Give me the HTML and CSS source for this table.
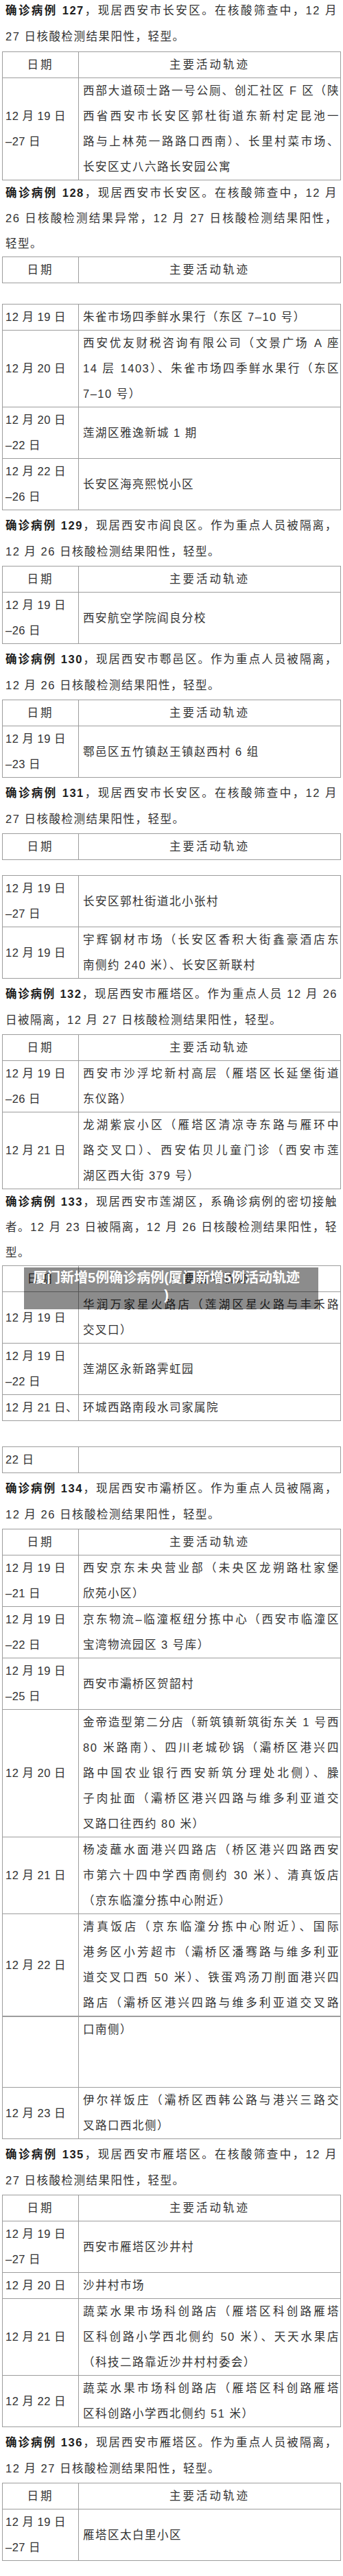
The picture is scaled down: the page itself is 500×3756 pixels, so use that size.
FILE: index.html
```html
<!DOCTYPE html>
<html lang="zh-CN">
<head>
<meta charset="utf-8">
<title>确诊病例活动轨迹</title>
<link rel="stylesheet" href="styles.css">
</head>
<body>
<div class="page">

<p class="para first"><span class="ln j"><b>确诊病例 127</b>，现居西安市长安区。在核酸筛查中，12 月</span><span class="ln">27 日核酸检测结果阳性，轻型。</span></p>
<table class="trk">
<colgroup><col class="dcol"><col></colgroup>
<tr><th>日期</th><th>主要活动轨迹</th></tr>
<tr><td class="d"><span class="ln">12 月 19 日</span><span class="ln">–27 日</span></td><td class="c"><span class="ln j">西部大道硕士路一号公厕、创汇社区 F 区（陕</span><span class="ln j">西省西安市长安区郭杜街道东新村定昆池一</span><span class="ln j">路与上林苑一路路口西南）、长里村菜市场、</span><span class="ln">长安区丈八六路长安园公寓</span></td></tr>
</table>

<p class="para p3"><span class="ln j"><b>确诊病例 128</b>，现居西安市长安区。在核酸筛查中，12 月</span><span class="ln j">26 日核酸检测结果异常，12 月 27 日核酸检测结果阳性，</span><span class="ln">轻型。</span></p>
<table class="trk">
<colgroup><col class="dcol"><col></colgroup>
<tr><th>日期</th><th>主要活动轨迹</th></tr>
</table>
<table class="trk gap30">
<colgroup><col class="dcol"><col></colgroup>
<tr><td class="d">12 月 19 日</td><td class="c">朱雀市场四季鲜水果行（东区 7–10 号）</td></tr>
<tr><td class="d">12 月 20 日</td><td class="c"><span class="ln j">西安优友财税咨询有限公司（文景广场 A 座</span><span class="ln j">14 层 1403）、朱雀市场四季鲜水果行（东区</span><span class="ln">7–10 号）</span></td></tr>
<tr><td class="d"><span class="ln">12 月 20 日</span><span class="ln">–22 日</span></td><td class="c">莲湖区雅逸新城 1 期</td></tr>
<tr><td class="d"><span class="ln">12 月 22 日</span><span class="ln">–26 日</span></td><td class="c">长安区海亮熙悦小区</td></tr>
</table>

<p class="para"><span class="ln j"><b>确诊病例 129</b>，现居西安市阎良区。作为重点人员被隔离，</span><span class="ln">12 月 26 日核酸检测结果阳性，轻型。</span></p>
<table class="trk">
<colgroup><col class="dcol"><col></colgroup>
<tr><th>日期</th><th>主要活动轨迹</th></tr>
<tr><td class="d"><span class="ln">12 月 19 日</span><span class="ln">–26 日</span></td><td class="c">西安航空学院阎良分校</td></tr>
</table>

<p class="para"><span class="ln j"><b>确诊病例 130</b>，现居西安市鄠邑区。作为重点人员被隔离，</span><span class="ln">12 月 26 日核酸检测结果阳性，轻型。</span></p>
<table class="trk">
<colgroup><col class="dcol"><col></colgroup>
<tr><th>日期</th><th>主要活动轨迹</th></tr>
<tr><td class="d"><span class="ln">12 月 19 日</span><span class="ln">–23 日</span></td><td class="c">鄠邑区五竹镇赵王镇赵西村 6 组</td></tr>
</table>

<p class="para"><span class="ln j"><b>确诊病例 131</b>，现居西安市长安区。在核酸筛查中，12 月</span><span class="ln">27 日核酸检测结果阳性，轻型。</span></p>
<table class="trk">
<colgroup><col class="dcol"><col></colgroup>
<tr><th>日期</th><th>主要活动轨迹</th></tr>
</table>
<table class="trk gap22">
<colgroup><col class="dcol"><col></colgroup>
<tr><td class="d"><span class="ln">12 月 19 日</span><span class="ln">–27 日</span></td><td class="c">长安区郭杜街道北小张村</td></tr>
<tr><td class="d">12 月 19 日</td><td class="c"><span class="ln j">宇辉钢材市场（长安区香积大街鑫豪酒店东</span><span class="ln">南侧约 240 米）、长安区新联村</span></td></tr>
</table>

<p class="para"><span class="ln j"><b>确诊病例 132</b>，现居西安市雁塔区。作为重点人员 12 月 26</span><span class="ln">日被隔离，12 月 27 日核酸检测结果阳性，轻型。</span></p>
<table class="trk">
<colgroup><col class="dcol"><col></colgroup>
<tr><th>日期</th><th>主要活动轨迹</th></tr>
<tr><td class="d"><span class="ln">12 月 19 日</span><span class="ln">–26 日</span></td><td class="c"><span class="ln j">西安市沙浮坨新村高层（雁塔区长延堡街道</span><span class="ln">东仪路）</span></td></tr>
<tr><td class="d">12 月 21 日</td><td class="c"><span class="ln j">龙湖紫宸小区（雁塔区清凉寺东路与雁环中</span><span class="ln j">路交叉口）、西安佑贝儿童门诊（西安市莲</span><span class="ln">湖区西大街 379 号）</span></td></tr>
</table>

<p class="para p3"><span class="ln j"><b>确诊病例 133</b>，现居西安市莲湖区，系确诊病例的密切接触</span><span class="ln j">者。12 月 23 日被隔离，12 月 26 日核酸检测结果阳性，轻</span><span class="ln">型。</span></p>
<div class="wrap">
<table class="trk">
<colgroup><col class="dcol"><col></colgroup>
<tr><th>日期</th><th>主要活动轨迹</th></tr>
<tr><td class="d">12 月 19 日</td><td class="c"><span class="ln j">华润万家星火路店（莲湖区星火路与丰禾路</span><span class="ln">交叉口）</span></td></tr>
<tr><td class="d"><span class="ln">12 月 19 日</span><span class="ln">–22 日</span></td><td class="c">莲湖区永新路霁虹园</td></tr>
<tr><td class="d">12 月 21 日、</td><td class="c">环城西路南段水司家属院</td></tr>
</table>
<div class="ovl">厦门新增5例确诊病例(厦门新增5例活动轨迹<br>)</div>
</div>
<table class="trk gap37">
<colgroup><col class="dcol"><col></colgroup>
<tr><td class="d">22 日</td><td class="c"></td></tr>
</table>

<p class="para"><span class="ln j"><b>确诊病例 134</b>，现居西安市灞桥区。作为重点人员被隔离，</span><span class="ln">12 月 26 日核酸检测结果阳性，轻型。</span></p>
<table class="trk">
<colgroup><col class="dcol"><col></colgroup>
<tr><th>日期</th><th>主要活动轨迹</th></tr>
<tr><td class="d"><span class="ln">12 月 19 日</span><span class="ln">–21 日</span></td><td class="c"><span class="ln j">西安京东未央营业部（未央区龙朔路杜家堡</span><span class="ln">欣苑小区）</span></td></tr>
<tr><td class="d"><span class="ln">12 月 19 日</span><span class="ln">–22 日</span></td><td class="c"><span class="ln j">京东物流–临潼枢纽分拣中心（西安市临潼区</span><span class="ln">宝湾物流园区 3 号库）</span></td></tr>
<tr><td class="d"><span class="ln">12 月 19 日</span><span class="ln">–25 日</span></td><td class="c">西安市灞桥区贺韶村</td></tr>
<tr><td class="d">12 月 20 日</td><td class="c"><span class="ln j">金帝造型第二分店（新筑镇新筑街东关 1 号西</span><span class="ln j">80 米路南）、四川老城砂锅（灞桥区港兴四</span><span class="ln j">路中国农业银行西安新筑分理处北侧）、臊</span><span class="ln j">子肉扯面（灞桥区港兴四路与维多利亚道交</span><span class="ln">叉路口往西约 80 米）</span></td></tr>
<tr><td class="d">12 月 21 日</td><td class="c"><span class="ln j">杨凌蘸水面港兴四路店（桥区港兴四路西安</span><span class="ln j">市第六十四中学西南侧约 30 米）、清真饭店</span><span class="ln">（京东临潼分拣中心附近）</span></td></tr>
<tr><td class="d">12 月 22 日</td><td class="c"><span class="ln j">清真饭店（京东临潼分拣中心附近）、国际</span><span class="ln j">港务区小芳超市（灞桥区潘骞路与维多利亚</span><span class="ln j">道交叉口西 50 米）、铁蛋鸡汤刀削面港兴四</span><span class="ln j">路店（灞桥区港兴四路与维多利亚道交叉路</span></td></tr>
</table>
<table class="trk">
<colgroup><col class="dcol"><col></colgroup>
<tr><td class="d"></td><td class="c hang">口南侧）</td></tr>
<tr><td class="d">12 月 23 日</td><td class="c"><span class="ln j">伊尔祥饭庄（灞桥区西韩公路与港兴三路交</span><span class="ln">叉路口西北侧）</span></td></tr>
</table>

<p class="para"><span class="ln j"><b>确诊病例 135</b>，现居西安市雁塔区。在核酸筛查中，12 月</span><span class="ln">27 日核酸检测结果阳性，轻型。</span></p>
<table class="trk">
<colgroup><col class="dcol"><col></colgroup>
<tr><th>日期</th><th>主要活动轨迹</th></tr>
<tr><td class="d"><span class="ln">12 月 19 日</span><span class="ln">–27 日</span></td><td class="c">西安市雁塔区沙井村</td></tr>
<tr><td class="d">12 月 20 日</td><td class="c">沙井村市场</td></tr>
<tr><td class="d">12 月 21 日</td><td class="c"><span class="ln j">蔬菜水果市场科创路店（雁塔区科创路雁塔</span><span class="ln j">区科创路小学西北侧约 50 米）、天天水果店</span><span class="ln">（科技二路靠近沙井村村委会）</span></td></tr>
<tr><td class="d">12 月 22 日</td><td class="c"><span class="ln j">蔬菜水果市场科创路店（雁塔区科创路雁塔</span><span class="ln">区科创路小学西北侧约 51 米）</span></td></tr>
</table>

<p class="para"><span class="ln j"><b>确诊病例 136</b>，现居西安市雁塔区。作为重点人员被隔离，</span><span class="ln">12 月 27 日核酸检测结果阳性，轻型。</span></p>
<table class="trk">
<colgroup><col class="dcol"><col></colgroup>
<tr><th>日期</th><th>主要活动轨迹</th></tr>
<tr><td class="d"><span class="ln">12 月 19 日</span><span class="ln">–27 日</span></td><td class="c">雁塔区太白里小区</td></tr>
</table>

</div>
</body>
</html>
```

FILE: styles.css
```css
* { box-sizing: border-box; }

html, body {
  margin: 0;
  background: #ffffff;
}

body {
  color: #333333;
  font-family: "Liberation Sans", "Noto Sans CJK SC", sans-serif;
  font-size: 16.5px;
  letter-spacing: 1.5px;
}

.page {
  width: 500px;
  overflow: hidden;
}

.para {
  margin: 0;
  padding: 3px 8px 2px 8px;
  line-height: 38px;
}

.para.first {
  margin-top: -4px;
  padding-top: 0;
  padding-bottom: 3px;
}

.para.p3 {
  line-height: 37px;
  padding-top: 0;
  padding-bottom: 0;
}

.para b {
  color: #1c1c1c;
  font-weight: bold;
}

.ln {
  display: block;
}

.j {
  text-align: justify;
  text-align-last: justify;
}

.trk {
  margin-left: 3px;
  width: 494px;
  border-collapse: collapse;
  table-layout: fixed;
}

.trk .dcol {
  width: 111px;
}

.trk th,
.trk td {
  border: 1px solid #9d9d9d;
  line-height: 37px;
  padding: 0;
  vertical-align: middle;
}

.trk th {
  font-weight: normal;
  text-align: center;
  letter-spacing: 3px;
}

.trk td.d {
  padding-left: 4px;
  white-space: nowrap;
  letter-spacing: 0.5px;
}

.trk td.c {
  padding: 0 1px 0 6px;
}

.trk td.hang {
  vertical-align: top;
  padding-bottom: 65px;
}

.gap30 { margin-top: 30px; }
.gap22 { margin-top: 22px; }
.gap37 { margin-top: 37px; }

.wrap {
  position: relative;
}

.ovl {
  position: absolute;
  left: 35px;
  top: 3px;
  width: 429px;
  height: 61px;
  padding: 3px 22px 0 8px;
  background: rgba(0, 0, 0, 0.45);
  color: #ffffff;
  font-size: 20px;
  font-weight: bold;
  line-height: 25px;
  letter-spacing: 0;
  text-align: center;
}
```
